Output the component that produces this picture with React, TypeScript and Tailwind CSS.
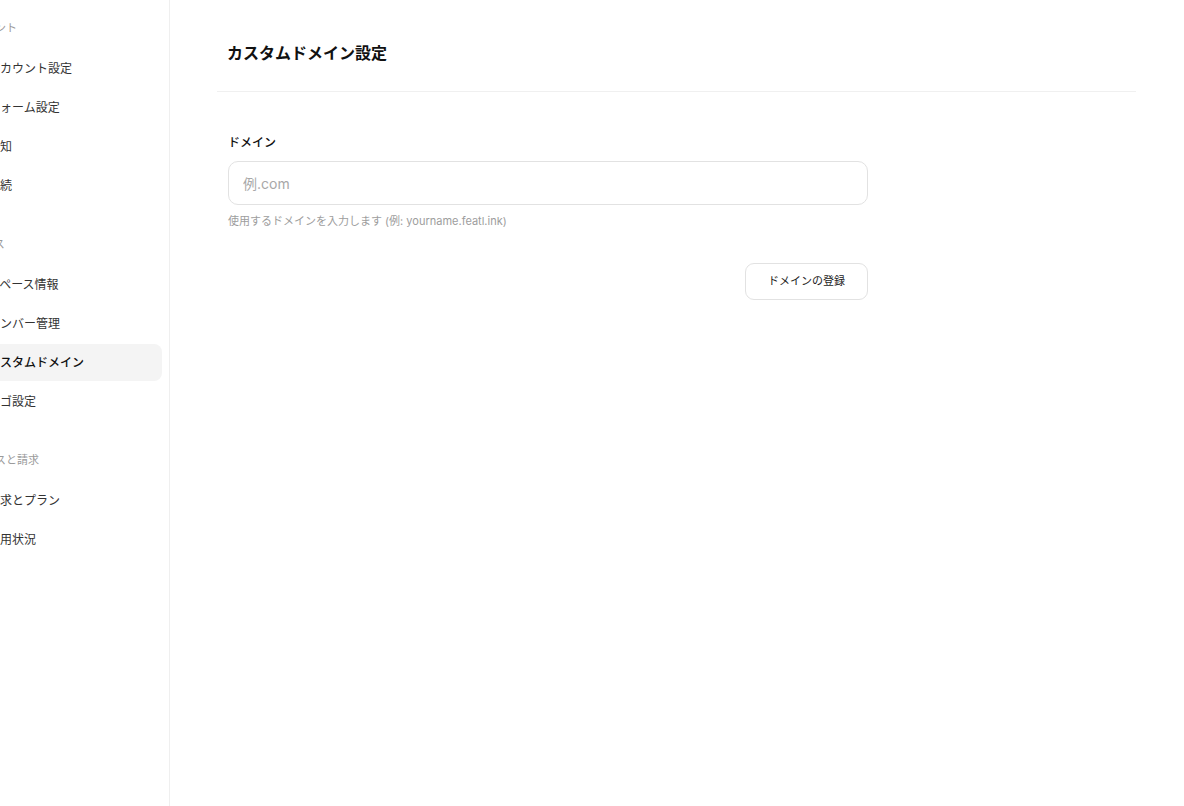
import type { ReactNode } from "react";

// ────────────────────────────────────────────────
// 設定画面 — 左のナビ（横スクロールで一部見切れ）、右にカスタムドメイン設定フォーム
// ────────────────────────────────────────────────

const FONT = { fontFamily: '"Inter", "Noto Sans CJK JP", sans-serif' };

type NavSection = { label: string; items: string[] };

const sections: NavSection[] = [
  { label: "アカウント", items: ["アカウント設定", "フォーム設定", "通知", "接続"] },
  { label: "スペース", items: ["スペース情報", "メンバー管理", "カスタムドメイン", "ロゴ設定"] },
  { label: "サービスと請求", items: ["請求とプラン", "利用状況"] },
];

const ACTIVE = "カスタムドメイン";

function NavItem({ children, active }: { children: ReactNode; active?: boolean }) {
  return (
    <a
      href="#"
      className={`flex h-[37px] items-center rounded-lg pl-[28px] text-[12px] ${
        active ? "bg-[#f4f4f4] font-medium text-[#111]" : "text-[#333] hover:bg-[#f7f7f7]"
      }`}
    >
      {children}
    </a>
  );
}

function Sidebar() {
  return (
    <aside className="h-full w-[170px] shrink-0 overflow-hidden border-r border-[#efefef]">
      <div className="-ml-[40px] w-[210px] pr-[8px] pt-5">
        {sections.map((s, i) => (
          <div key={s.label} className={i > 0 ? "mt-8" : ""}>
            <div className="mb-[14px] h-4 whitespace-nowrap pl-[2px] text-[11px] leading-4 text-[#9a9a9a]">
              {s.label}
            </div>
            <nav className="flex flex-col gap-[2px]">
              {s.items.map((it) => (
                <NavItem key={it} active={it === ACTIVE}>
                  {it}
                </NavItem>
              ))}
            </nav>
          </div>
        ))}
      </div>
    </aside>
  );
}

export default function App() {
  return (
    <div className="flex h-[806px] w-full bg-white text-[#111]" style={FONT}>
      <Sidebar />

      <main className="min-w-0 flex-1 pl-[47px] pr-12 pt-[41px]">
        <header className="border-b border-[#f0f0f0] px-[10px] pb-[26px]">
          <h1 className="text-[16px] font-semibold leading-6">カスタムドメイン設定</h1>
        </header>

        <form className="mt-[43px] w-[651px] pl-[11px]" onSubmit={(e) => e.preventDefault()}>
          <label htmlFor="domain" className="block text-[12px] font-medium leading-4 text-[#111]">
            ドメイン
          </label>
          <input
            id="domain"
            type="text"
            placeholder="例.com"
            className="mt-[10px] h-[44px] w-full rounded-[10px] border border-[#e2e2e2] px-[14px] text-[14px] text-[#111] outline-none placeholder:text-[#a8a8a8] focus:border-[#c8c8c8]"
          />
          <p className="mt-[9px] text-[11px] leading-[14px] text-[#9d9d9d]">
            使用するドメインを入力します (例: yourname.featl.ink)
          </p>

          <div className="mt-[35px] flex justify-end">
            <button
              type="submit"
              className="h-[37px] w-[123px] rounded-[9px] border border-[#e2e2e2] bg-white text-[11px] text-[#222] hover:bg-[#fafafa]"
            >
              ドメインの登録
            </button>
          </div>
        </form>
      </main>
    </div>
  );
}
